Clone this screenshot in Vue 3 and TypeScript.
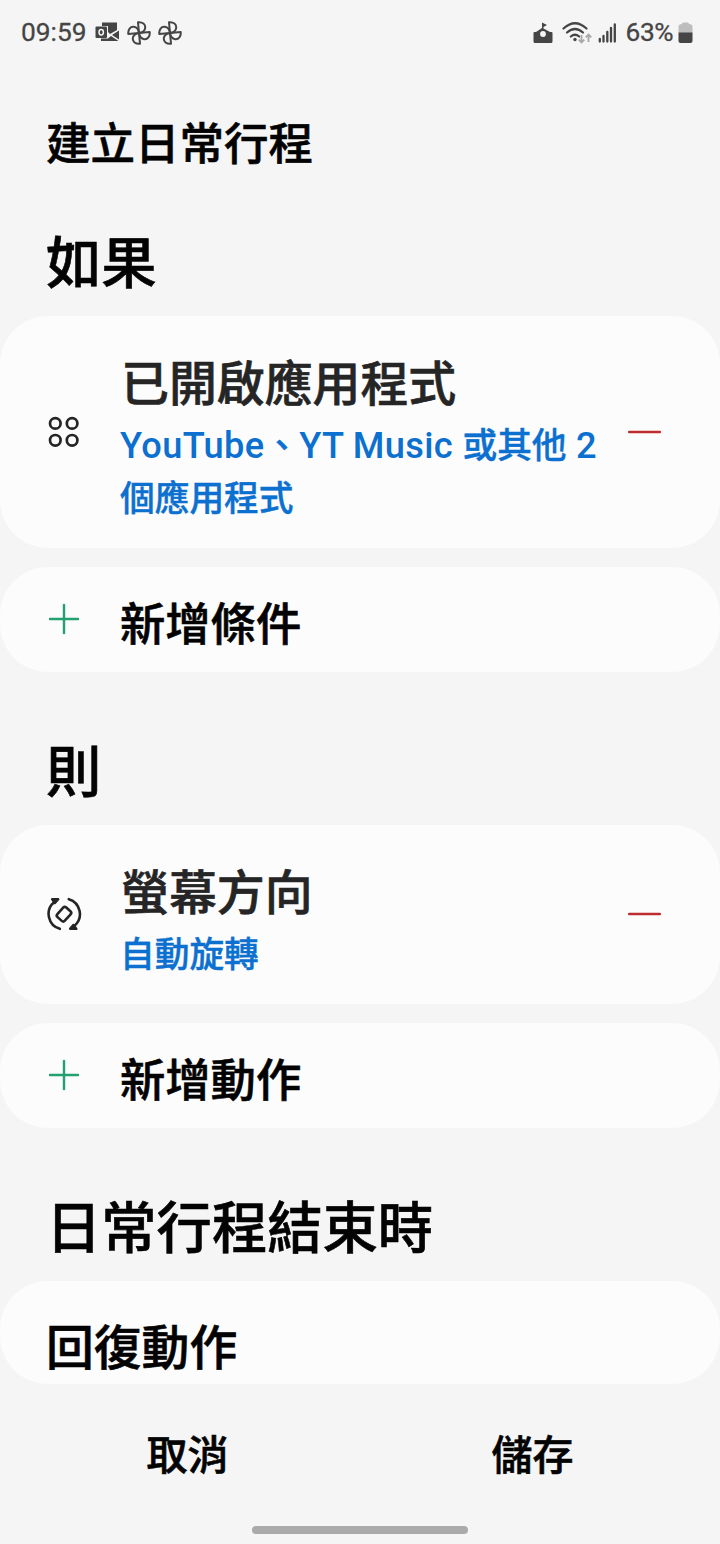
<script setup lang="ts">
interface Row {
  kind: 'item' | 'add'
  title: string
  sub?: { text: string; latin?: boolean }[]
  icon?: 'apps' | 'rotate'
}
interface Section {
  heading: string
  rows: Row[]
}

const sections: Section[] = [
  {
    heading: '如果',
    rows: [
      {
        kind: 'item',
        icon: 'apps',
        title: '已開啟應用程式',
        sub: [
          { text: 'YouTube', latin: true },
          { text: '、' },
          { text: 'YT Music ', latin: true },
          { text: '或其他' },
          { text: ' 2 ', latin: true },
          { text: '個應用程式' },
        ],
      },
      { kind: 'add', title: '新增條件' },
    ],
  },
  {
    heading: '則',
    rows: [
      { kind: 'item', icon: 'rotate', title: '螢幕方向', sub: [{ text: '自動旋轉' }] },
      { kind: 'add', title: '新增動作' },
    ],
  },
]
</script>

<template>
  <div class="screen">
    <header class="status">
      <span class="clock">09:59</span>
      <svg class="outlook" width="25" height="21" viewBox="0 0 25 21">
        <path d="M7 .5h15v7.500l-7 4-2-2V4H7z M24 8.500v9l-7-4.500z M6 16.500h7l3-2.500 7.500 5H6z" fill="#454545" />
        <rect x="0.500" y="4.500" width="11.500" height="11.500" rx="1" fill="#454545" />
        <ellipse cx="6.200" cy="10.200" rx="2.200" ry="2.700" fill="none" stroke="#f5f5f5" stroke-width="1.500" />
      </svg>
      <svg v-for="n in 2" :key="n" class="fan" width="24" height="24" viewBox="0 0 24 24">
        <g fill="none" stroke="#454545" stroke-width="2" stroke-linejoin="round">
          <path
            v-for="a in [0, 90, 180, 270]"
            :key="a"
            :transform="`rotate(${a} 12 12)`"
            d="M12 12L11 1.300C15.500 .8 18.600 3.400 18.200 6.800C17.800 9.800 15 11.600 12 12Z"
          />
        </g>
      </svg>
      <span class="spacer"></span>
      <svg class="school" width="20" height="22" viewBox="0 0 20 22">
        <path d="M9 6V0.500L14 3l-3.500 2v1.500L17 10h1.500q1 0 1 1v8.500q0 1.500-1.500 1.500H2q-1.500 0-1.500-1.500V11q0-1 1-1H3z" fill="#454545" />
        <circle cx="10" cy="12" r="2.900" fill="#f5f5f5" />
      </svg>
      <svg class="wifi" width="31" height="24" viewBox="0 0 31 24">
        <g fill="none" stroke="#454545" stroke-width="2.200" stroke-linecap="round">
          <path d="M1.500 7.500Q13 -3 24.500 7.500" />
          <path d="M5 11.500Q13 4.500 21 11.500" />
          <path d="M8.800 15.500Q13 12 17.200 15.500" />
        </g>
        <circle cx="13" cy="18.500" r="1.700" fill="#454545" />
        <g fill="none" stroke="#aaa" stroke-width="1.900">
          <path d="M19.500 14v7.500M16.700 18.700l2.800 2.800 2.800-2.800M26.500 21v-7.500M23.700 16.300l2.800-2.800 2.800 2.800" />
        </g>
      </svg>
      <svg class="signal" width="19" height="20" viewBox="0 0 19 20">
        <path d="M1.800 16v2.500M5.500 13v5.500M9.300 9v9.500M13 5v13.500M16.800 1.500v17" stroke="#454545" stroke-width="2.300" stroke-linecap="round" />
      </svg>
      <span class="percent">63%</span>
      <svg class="battery" width="15" height="22" viewBox="0 0 15 22">
        <path d="M4 2q0-1.500 1.500-1.500h4Q11 .5 11 2q3.500 0 3.500 3v6H.5V5q0-3 3.500-3z" fill="#bdbdbd" />
        <path d="M.5 10.500h14V19q0 2-2 2h-10q-2 0-2-2z" fill="#454545" />
      </svg>
    </header>

    <h1>建立日常行程</h1>

    <section v-for="s in sections" :key="s.heading">
      <h2>{{ s.heading }}</h2>
      <div v-for="r in s.rows" :key="r.title" class="card" :class="r.kind">
        <div class="lead">
          <svg v-if="r.kind === 'add'" width="32" height="32" viewBox="0 0 32 32">
            <path d="M16 2v28M2 16h28" stroke="#22a06f" stroke-width="2.400" stroke-linecap="round" />
          </svg>
          <svg v-else-if="r.icon === 'apps'" width="32" height="32" viewBox="0 0 32 32">
            <g fill="none" stroke="#252525" stroke-width="2.700">
              <circle cx="7.300" cy="7.400" r="5.300" />
              <circle cx="24.100" cy="7.400" r="5.300" />
              <circle cx="7.300" cy="24.300" r="5.300" />
              <circle cx="24.100" cy="24.300" r="5.300" />
            </g>
          </svg>
          <svg v-else width="36" height="36" viewBox="0 0 36 36">
            <g fill="none" stroke="#252525" stroke-width="2.600" stroke-linecap="round" stroke-linejoin="round">
              <path d="M13.800 32.800A15.500 15.500 0 0 1 8 6.200" />
              <path d="M22.800 3.200A15.500 15.500 0 0 1 28.500 29.800" />
              <rect x="13" y="11.700" width="10" height="13" rx="2.200" transform="rotate(42 18 18.200)" />
            </g>
            <path d="M6 3.200H12.300L8.800 7.200ZM30.500 32.800H24L27.500 28.800Z" fill="#252525" stroke="#252525" stroke-width="2.200" stroke-linejoin="round" />
          </svg>
        </div>
        <div class="body">
          <div class="name">{{ r.title }}</div>
          <div v-if="r.sub" class="sub">
            <span v-for="(p, i) in r.sub" :key="i" :class="{ latin: p.latin }">{{ p.text }}</span>
          </div>
        </div>
        <svg v-if="r.kind === 'item'" class="minus" width="33" height="4" viewBox="0 0 33 4">
          <path d="M1.200 2h30.600" stroke="#bf2c30" stroke-width="2.500" stroke-linecap="round" />
        </svg>
      </div>
    </section>

    <section>
      <h2>日常行程結束時</h2>
      <div class="card restore">回復動作</div>
    </section>

    <footer>
      <button type="button">取消</button>
      <button type="button">儲存</button>
    </footer>
    <div class="handle"></div>
  </div>
</template>

<style>
body {
  background: #f5f5f5;
}
</style>

<style scoped>
.screen {
  width: 720px;
  height: 1544px;
  overflow: hidden;
  display: flex;
  flex-direction: column;
  background: #f5f5f5;
  color: #030303;
  font-family: "Noto Sans CJK TC", sans-serif;
  font-weight: 500;
  -webkit-text-stroke: 0.6px currentColor;
}
svg {
  display: block;
  flex: none;
}
.status {
  height: 64px;
  flex: none;
  box-sizing: border-box;
  padding: 1px 27px 0 21px;
  display: flex;
  align-items: center;
  font: 400 26.3px/60px Roboto, sans-serif;
  color: #454545;
  -webkit-text-stroke: 0.3px currentColor;
}
.clock,
.percent {
  padding-bottom: 2px;
}
.clock {
  width: 74px;
}
.fan {
  margin-left: 7px;
}
.spacer {
  flex: 1;
}
.wifi {
  margin-left: 9px;
}
.signal {
  margin: 0 9px 0 5px;
}
.percent {
  width: 48.5px;
  letter-spacing: -0.4px;
}
.battery {
  margin-left: 4px;
}
h1 {
  margin: 0;
  padding-left: 46px;
  height: 153px;
  flex: none;
  font-size: 44.5px;
  line-height: 153px;
  font-weight: 500;
}
h2 {
  margin: 0 0 15px;
  padding-left: 46px;
  font-size: 55.3px;
  line-height: 84px;
  font-weight: 500;
}
section + section {
  margin-top: 54.5px;
}
.card {
  display: flex;
  align-items: center;
  box-sizing: border-box;
  background: #fcfcfc;
  border-radius: 48px;
}
.card.item {
  min-height: 178.5px;
  padding: 34px 59px 21.5px 0;
  margin-bottom: 19.5px;
}
.card.add {
  height: 104.5px;
}
.lead {
  width: 128px;
  margin-right: -8px;
  display: flex;
  justify-content: center;
  flex: none;
}
.item .lead,
.minus {
  margin-top: -12.5px;
}
.body {
  flex: 1;
}
.name {
  font-size: 45.3px;
  line-height: 100px;
  padding-top: 3px;
}
.item .name {
  font-size: 47.9px;
  line-height: 60px;
  padding: 0 0 0 1px;
  color: #252525;
}
.sub {
  margin-top: 10px;
  width: 495px;
  font-family: Roboto, "Noto Sans CJK TC", sans-serif;
  font-size: 34.7px;
  line-height: 53px;
  color: #0b70cf;
  -webkit-text-stroke-width: 0.4px;
}
.latin {
  font-size: 36.2px;
  line-height: 1;
  letter-spacing: 0.35px;
  -webkit-text-stroke-width: 0;
}
.restore {
  height: 103px;
  padding: 25px 46px 0;
  font-size: 47.8px;
  line-height: 78px;
}
footer {
  display: flex;
  justify-content: space-around;
  padding: 28px 15px 0;
}
button {
  width: 345px;
  height: 80px;
  padding: 0;
  border: 0;
  background: none;
  color: inherit;
  font: inherit;
  font-size: 41px;
}
.handle {
  width: 216px;
  height: 8px;
  margin: auto auto 10px;
  flex: none;
  border-radius: 4px;
  background: #aaa;
}
</style>
